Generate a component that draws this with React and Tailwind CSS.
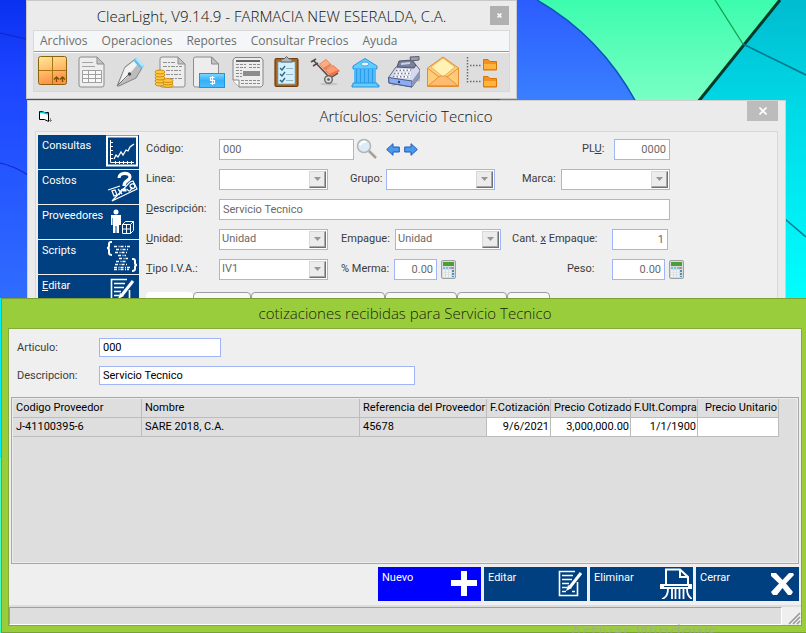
import React from "react";

const uiFont = "font-[Roboto,'Liberation_Sans',sans-serif]";
const titleFont = "font-['Open_Sans','Noto_Sans',sans-serif]";

function Wallpaper() {
  return (
    <svg className="absolute inset-0 h-full w-full" viewBox="0 0 806 633" preserveAspectRatio="xMinYMin slice" aria-hidden="true">
      <defs>
        <linearGradient id="wpBlue" x1="0" y1="0" x2="0" y2="1">
          <stop offset="0" stopColor="#0a30f0" />
          <stop offset="0.25" stopColor="#1c44ff" />
          <stop offset="1" stopColor="#2f6cff" />
        </linearGradient>
        <linearGradient id="wpBlue2" x1="0" y1="0" x2="0" y2="1">
          <stop offset="0" stopColor="#2c5cff" />
          <stop offset="1" stopColor="#3a80ff" />
        </linearGradient>
        <linearGradient id="wpMint" x1="0" y1="0" x2="0" y2="1">
          <stop offset="0" stopColor="#3cfcae" />
          <stop offset="1" stopColor="#7affc4" />
        </linearGradient>
        <linearGradient id="wpCyan" x1="0" y1="0" x2="0" y2="1">
          <stop offset="0" stopColor="#00bcd0" />
          <stop offset="0.35" stopColor="#00d8e6" />
          <stop offset="1" stopColor="#00ffff" />
        </linearGradient>
      </defs>
      <rect width="806" height="298" fill="url(#wpBlue)" />
      <path d="M0 33L26 39M0 163Q14 166 28 175" stroke="#1226c0" strokeWidth="1.2" fill="none" />
      <path d="M500 0H537Q600 36 636 102H500Z" fill="url(#wpBlue2)" />
      <path d="M537 0Q600 36 636 102H700L780 0Z" fill="url(#wpMint)" />
      <path d="M537 0Q600 36 636 102" stroke="#0a58b8" strokeWidth="1.5" fill="none" />
      <path d="M780 0L698 102V300H806V0Z" fill="url(#wpCyan)" />
      <path d="M780 0L698 102" stroke="#04382a" strokeWidth="3" />
      <path d="M715 0L743 44" stroke="#12a050" strokeWidth="1.3" />
      <path d="M743 44L806 75M785 219L806 237" stroke="#04788c" strokeWidth="1.6" />
      <rect y="298" width="806" height="160" fill="#00f0ff" />
      <rect y="458" width="806" height="175" fill="#48ffc4" />
    </svg>
  );
}

/* ---------- toolbar icons ---------- */

const Page = ({ x = 3, w = 25 }) => (
  <>
    <path d={`M${x + 2} 1H${x + w - 7}L${x + w} 8V29a2 2 0 0 1-2 2H${x + 2}a2 2 0 0 1-2-2V3a2 2 0 0 1 2-2Z`} fill="#ededed" stroke="#8c8c8c" />
    <path d={`M${x + w - 7} 1V8H${x + w}Z`} fill="#c4c4c4" stroke="#8c8c8c" />
  </>
);

const toolbar = [
  ["Almacén", (
    <>
      <defs>
        <linearGradient id="box" x1="0" y1="0" x2="0.3" y2="1">
          <stop offset="0" stopColor="#ffe898" /><stop offset="0.5" stopColor="#ffc070" /><stop offset="1" stopColor="#ff9048" />
        </linearGradient>
      </defs>
      <rect x="1.5" y="0.5" width="28" height="28" rx="2" fill="url(#box)" stroke="#8a6408" />
      <path d="M15.500 1V28M2 14.500H29" stroke="#a87410" />
      <path d="M19.500 26V21M25.500 26V21M17 23.500L19.500 21L22 23.500M23 23.500L25.500 21L28 23.500" stroke="#7a5200" fill="none" strokeWidth="1.300" />
    </>
  )],
  ["Hoja", (
    <>
      <Page />
      <path d="M6 6.500H17M6 10.500H19" stroke="#a4a4a4" />
      <path d="M6.500 14.500H25.500V26.500H6.500ZM6.500 18.500H25.500M6.500 22.500H25.500M12.500 14.500V26.500M19.500 14.500V26.500" stroke="#a0a0a0" fill="#f8f8f8" />
    </>
  )],
  ["Pluma", (
    <>
      <path d="M2 30L10 11L19 4L27 12L21 22L4 30Z" fill="#bcbcbc" stroke="#848484" />
      <path d="M10 12L19 5L22 9L11 22L4 28Z" fill="#f2f2f2" />
      <path d="M3 29L14 18" stroke="#707070" />
      <circle cx="14.500" cy="18" r="1.700" fill="#444" />
      <path d="M18 4L21 2L29 10L26 13Z" fill="#58c0f4" />
      <path d="M20 3L23 3L29 9L27 11Z" fill="#b0e4ff" />
    </>
  )],
  ["Pagos", (
    <>
      <Page x={6} w={25} />
      <path d="M9 6.500H22M9 10.500H28M12 14.500H28M12 18.500H28M16 22.500H28" stroke="#909090" strokeDasharray="4 1 2 1" />
      <g fill="#ffc848" stroke="#c88400" strokeWidth="0.900">
        <ellipse cx="6" cy="28" rx="5" ry="2" /><ellipse cx="6" cy="25" rx="5" ry="2" /><ellipse cx="6" cy="22" rx="5" ry="2" /><ellipse cx="6" cy="19" rx="5" ry="2" /><ellipse cx="6" cy="16" rx="5" ry="2" />
        <ellipse cx="14" cy="29.500" rx="5" ry="2" /><ellipse cx="14" cy="27" rx="5" ry="2" /><ellipse cx="14" cy="24.500" rx="5" ry="2" />
      </g>
    </>
  )],
  ["Facturas", (
    <>
      <Page x={0.5} w={25} />
      <defs>
        <linearGradient id="bill" x1="0" y1="0" x2="0" y2="1"><stop offset="0" stopColor="#7cd8ff" /><stop offset="0.5" stopColor="#38b0f8" /><stop offset="1" stopColor="#48bcff" /></linearGradient>
      </defs>
      <rect x="6.500" y="17.500" width="25" height="14" fill="url(#bill)" stroke="#1c94e0" />
      <path d="M21.500 21.500H17.500V24.500H21.500V27.500H17M19.500 20V29" stroke="#fff" fill="none" strokeWidth="1.200" />
    </>
  )],
  ["Prensa", (
    <>
      <path d="M3 1.500H29L31 4V29L29 31H7L1 24V4Z" fill="#ededed" stroke="#848484" />
      <path d="M1 24H7V31" fill="#fff" stroke="#848484" />
      <path d="M4 5H28" stroke="#666" strokeWidth="2" />
      <path d="M4 8.500H14M4 11.500H14M4 14.500H10M4 17.500H10M4 20.500H10M17 8.500H28M17 11.500H28M9 24.500H28M9 27.500H28" stroke="#8c8c8c" strokeDasharray="3 1" />
      <rect x="11" y="15" width="17" height="5" fill="#8c8c8c" />
    </>
  )],
  ["Pedidos", (
    <>
      <rect x="4" y="2.500" width="23" height="28" rx="1.500" fill="#a86420" stroke="#6e3c0c" strokeWidth="1.200" />
      <rect x="7" y="6" width="17" height="22" fill="#d4f0ff" stroke="#78b4d0" strokeWidth="0.800" />
      <path d="M10 6V3H13L15.500 0.500L18 3H21V6Z" fill="#b4b4b4" stroke="#666" />
      <path d="M9 12L11 14L14 10M9 18L11 20L14 16M9 24L11 26L14 22" stroke="#26667e" fill="none" strokeWidth="1.300" />
      <path d="M15 12.500H22M15 18.500H22M15 24.500H22" stroke="#98b4bc" />
    </>
  )],
  ["Despacho", (
    <>
      <ellipse cx="19" cy="28" rx="9" ry="1.500" fill="#c6c6c6" />
      <path d="M1 6L6 3M3 10L8 7M4 5L20 22L28 17" stroke="#5a4844" strokeWidth="1.500" fill="none" />
      <path d="M9 8L16 3L22 9L15 15Z" fill="#e8825c" />
      <path d="M15 15L23 9L30 15L21 21Z" fill="#e8744c" />
      <path d="M10 8L16 4L20 8L13 12Z" fill="#ffac7c" />
      <path d="M16 14L23 10L28 14L19 18Z" fill="#ff9c6c" />
      <circle cx="18.500" cy="23.500" r="3.800" fill="#dadada" stroke="#686868" strokeWidth="1.400" /><circle cx="18.500" cy="23.500" r="1.300" fill="#555" />
    </>
  )],
  ["Bancos", (
    <>
      <path d="M16 2.500L28 10V13H4V10Z" fill="#64ccff" stroke="#2496e0" />
      <ellipse cx="16" cy="8" rx="4" ry="2" fill="#e4f6ff" stroke="#2496e0" strokeWidth="0.800" />
      <rect x="5" y="13" width="22" height="14" fill="#54bcfa" />
      <path d="M7.500 13V27M11.500 13V27M15.500 13V27M19.500 13V27M23.500 13V27" stroke="#2c9ce8" strokeWidth="1.300" />
      <path d="M4 27H28V29H30V31H3V29H4Z" fill="#64ccff" stroke="#2496e0" />
    </>
  )],
  ["Caja", (
    <>
      <path d="M3 30L32 25V14L27 8" fill="#b4b4b4" />
      <path d="M0.500 21.500L8 11L28 9L32 14V20L24 31L1 27Z" fill="#d4d8f0" stroke="#646880" />
      <path d="M0.500 21.500L24 25V31L1 27Z" fill="#8cacf4" stroke="#4c5880" />
      <path d="M24 25L32 14V20L24 31Z" fill="#8c98b8" />
      <path d="M9 11L11 5L24 4L28 9L26 12Z" fill="#788098" stroke="#505464" />
      <path d="M13 8L22 7" stroke="#c0d4f8" strokeWidth="2" />
      <path d="M22 1L31 0.500V4L23 5Z" fill="#98a0ac" stroke="#5c5c70" />
      <path d="M8 14.500L24 14M6 17.500L24 17.500M5 20.500L22 21" stroke="#fff" strokeWidth="2" />
      <path d="M8 14.500L24 14M6 17.500L24 17.500M5 20.500L22 21" stroke="#7c7c88" strokeDasharray="1.500 2" strokeWidth="1.500" />
      <circle cx="11" cy="26" r="1.200" fill="#243c70" />
    </>
  )],
  ["Correo", (
    <>
      <path d="M0.500 12L16 1L31.500 12V30.500H0.500Z" fill="#ffcc78" stroke="#e48c30" />
      <path d="M16 2L28 11L16 21L4 11Z" fill="#fff2b4" stroke="#e8a850" strokeWidth="0.800" />
      <path d="M1 12.500L12 21L1 30M31 12.500L20 21L31 30M12 21H20" stroke="#e4903c" fill="none" />
      <path d="M1.500 29.500L13 20H19L30.500 29.500Z" fill="#ffbc70" stroke="#e4903c" strokeWidth="0.800" />
    </>
  )],
  ["Árbol", (
    <>
      <path d="M1.500 1V28M4 9.500H16M4 25.500H16" stroke="#686868" strokeWidth="1.500" strokeDasharray="1.500 1.500" fill="none" />
      <path d="M17.500 3.500H22L24 5.500H30.500V14H17.500Z" fill="#f4901c" stroke="#d87400" /><path d="M18 8H30V13H18Z" fill="#ffb440" />
      <path d="M17.500 20.500H22L24 22.500H30.500V31H17.500Z" fill="#f4901c" stroke="#d87400" /><path d="M18 25H30V30H18Z" fill="#ffb440" />
    </>
  )],
];

/* ---------- command button icons (white line art, 32px box) ---------- */

const glyphs = {
  chart: (
    <>
      <rect x="1" y="1.500" width="30" height="29" fill="none" stroke="#fff" strokeWidth="2" />
      <path d="M4.500 5V27.500H28M4 7.500H7M4 11.500H7M4 15.500H7M4 19.500H7M4 23.500H7M9.500 26V29M13.500 26V29M17.500 26V29M21.500 26V29M25.500 26V29" stroke="#fff" fill="none" />
      <path d="M8 24L10 20L12 22L15 17L17 20L20 15L22 16L24 12L28 9" stroke="#fff" fill="none" strokeWidth="1.300" />
    </>
  ),
  cost: (
    <>
      <path d="M2 20L14 16M24 12L27 11L31 19L6 31Z" stroke="#fff" fill="none" strokeWidth="1.200" />
      <path d="M6 21L8 26L11 25L9 20ZM12 19L16 24M16 19L13 25M21 19Q24 24 26 17M26 14C22 15 25 20 28 18C30 16 28 13 26 14" stroke="#fff" fill="none" strokeWidth="1.300" />
      <path d="M13 8C13 2 24 2 24 7C24 11 18 10 18 16M16.500 20H20.500" stroke="#fff" fill="none" strokeWidth="3.200" />
    </>
  ),
  provider: (
    <>
      <circle cx="10" cy="7" r="2.500" fill="#fff" />
      <path d="M5 10H15V20H13V28H10.500V21H9.500V28H7V13H6.500V20H5Z" fill="#fff" />
      <path d="M16.500 19.500H24.500V28.500H16.500ZM16.500 19.500L19.500 16.500H27.500V25.500L24.500 28.500M24.500 19.500L27.500 16.500M20.500 19.500V28.500M16.500 24H24.500" stroke="#fff" fill="none" />
    </>
  ),
  script: (
    <>
      <path d="M6 2H5Q3 2 3 4V6Q3 8 1 8Q3 8 3 10V13Q3 15 6 15M26 19H27Q29 19 29 21V23Q29 25 31 25Q29 25 29 27V29Q29 31 26 31" stroke="#fff" fill="none" strokeWidth="2" />
      <path d="M8 6.500H24M10 9.500H22M9 12.500H22M12 15.500H20M13 18.500H22M10 21.500H20M9 24.500H22M8 27.500H24M8 29.500H23" stroke="#fff" strokeDasharray="3 1.500 1 1" fill="none" strokeWidth="1.300" />
    </>
  ),
  edit: (
    <>
      <path d="M21 4.500H5.500V28.500H23.500V15" stroke="#fff" fill="none" strokeWidth="1.600" />
      <path d="M8 8.500H19M8 12.500H18M8 16.500H15M8 20.500H13M8 24.500H12M18 24.500H21" stroke="#fff" strokeWidth="1.500" />
      <path d="M27 6L16 20" stroke="#fff" strokeWidth="3" />
      <path d="M12 24L14 18L18 21Z" fill="#fff" />
    </>
  ),
  plus: <path d="M3 13H13V4H19V13H29V19H19V29H13V19H3Z" fill="#fff" />,
  shred: (
    <>
      <path d="M6 17V2.500H20L28 10V17M20 3V10H27" stroke="#fff" fill="none" strokeWidth="2" />
      <path d="M0 17H32V22H0Z" fill="#fff" /><path d="M4 19.500H28" stroke="#004080" />
      <path d="M8 22Q8 30 2 32M12 22V32M15.500 22V32M19.500 22V32M23.500 22V32M27 22Q27 29 32 32" stroke="#fff" fill="none" strokeWidth="1.800" />
    </>
  ),
  cross: <path d="M5 6H10L16.500 13L23 6H27L28 8L20 16.500L27 25L25 28H22L16.500 21L11 28H7L5 25L13 16.500L5 9Z" fill="#fff" />,
};

function CommandButton({ icon, children, className = "" }) {
  return (
    <button type="button" className={`flex h-[34px] items-start justify-between overflow-hidden pl-1 pr-px pt-1 text-left text-white ${className}`}>
      <span>{children}</span>
      <svg className="-mt-1 h-8 w-8 shrink-0" viewBox="0 0 32 32" aria-hidden="true">{glyphs[icon]}</svg>
    </button>
  );
}

/* ---------- form pieces ---------- */

function Field({ id, label, labelClass, inputClass, value }) {
  return (
    <>
      <label htmlFor={id} className={`shrink-0 text-[#3c3c3c] ${labelClass}`}>{label}</label>
      <input id={id} defaultValue={value} className={`h-[21px] shrink-0 border border-[#a0b4f8] bg-white px-[3px] text-[#6a6a6a] outline-none ${inputClass}`} />
    </>
  );
}

function Combo({ id, label, labelClass, boxClass, value = "" }) {
  return (
    <>
      <label htmlFor={id} className={`shrink-0 text-[#3c3c3c] ${labelClass}`}>{label}</label>
      <div className={`relative h-[21px] shrink-0 ${boxClass}`}>
        <select id={id} defaultValue={value} className="block h-full w-full appearance-none border border-[#a0b4f8] bg-white px-0.5 text-[#6a6a6a] outline-none">
          <option value={value}>{value}</option>
        </select>
        <span className="pointer-events-none absolute bottom-0.5 right-0.5 top-0.5 flex w-[17px] items-center justify-center border border-b-[#707070] border-l-[#d8d8d8] border-r-[#707070] border-t-[#d8d8d8] bg-[#ececec] shadow-[inset_-1px_-1px_0_#a8a8a8]">
          <svg className="h-1 w-[7px]" viewBox="0 0 7 4" aria-hidden="true"><path d="M0 0H7L3.500 4Z" fill="#969696" /></svg>
        </span>
      </div>
    </>
  );
}

function CalcButton() {
  return (
    <button type="button" aria-label="Calculadora" className="ml-1 shrink-0">
      <svg className="h-[19px] w-[15px]" viewBox="0 0 15 19" aria-hidden="true">
        <rect x="0.500" y="0.500" width="14" height="18" rx="1.500" fill="#d8dcdc" stroke="#9ca0a0" />
        <rect x="2" y="2" width="11" height="4" fill="#4c9c38" />
        <path d="M2 8H13" stroke="#60b0dc" strokeWidth="1.500" strokeDasharray="2 1" />
        <path d="M10 8H13" stroke="#e87048" strokeWidth="1.500" />
        <path d="M2 11H10M2 13.500H10M2 16H10" stroke="#f8f8f8" strokeWidth="1.500" strokeDasharray="2 1" />
        <path d="M12 10V17" stroke="#3c90cc" strokeWidth="2" strokeDasharray="2 1" />
      </svg>
    </button>
  );
}

function MainWindow() {
  return (
    <section className="absolute left-[26px] top-0 w-[491px] border border-[#c8c8c8] bg-[#ebebeb] px-1.5 pb-1.5">
      <header className="flex h-[29px] items-center">
        <h1 className={`flex-1 pl-5 text-center text-[15px] font-light leading-5 text-[#101010] ${titleFont}`}>ClearLight, V9.14.9 - FARMACIA NEW ESERALDA, C.A.</h1>
        <button type="button" aria-label="Cerrar ventana" className="mr-px flex h-[19px] w-[19px] items-center justify-center bg-[#b0b0b0]">
          <svg className="h-[5px] w-[5px]" viewBox="0 0 5 5" aria-hidden="true"><path d="M0.500 0.500L4.500 4.500M4.500 0.500L0.500 4.500" stroke="#fff" strokeWidth="1.500" /></svg>
        </button>
      </header>
      <div className="border border-[#d8d8d8] bg-[#dedede]">
        <nav className={`flex h-5 items-center gap-[14px] bg-[#f4f6f8] px-1.5 text-[12px] leading-4 text-[#6e6e6e] ${titleFont}`}>
          {["Archivos", "Operaciones", "Reportes", "Consultar Precios", "Ayuda"].map((item) => (
            <button type="button" key={item}>{item}</button>
          ))}
        </nav>
        <div className="border-t border-[#989898]">
          <div className="flex h-[39px] items-center gap-[7px] border-t border-white pl-[3px]">
            {toolbar.map(([name, drawing]) => (
              <button type="button" key={name} aria-label={name}>
                <svg className="h-8 w-8" viewBox="0 0 32 32" aria-hidden="true">{drawing}</svg>
              </button>
            ))}
          </div>
        </div>
      </div>
    </section>
  );
}

function ArticlesWindow() {
  return (
    <section className="absolute bottom-0 left-[27px] top-[100px] flex w-[759px] flex-col border border-[#d0d0d0] bg-[#ebebeb] px-[7px]">
      <header className="flex h-[30px] shrink-0 items-start">
        <svg className="ml-1 mt-[9px] h-[14px] w-[14px]" viewBox="0 0 14 14" aria-hidden="true">
          <path d="M0.500 1.500H3.500L5.500 2.500H9.500V11.500L5.500 9.500H0.500Z" fill="#fff" stroke="#000" />
          <path d="M1 2.500H4L9 4" stroke="#00c8d0" strokeWidth="1.500" fill="none" />
          <path d="M11.500 8V12M10 10.500H13" stroke="#888" />
        </svg>
        <h2 className={`mt-[5px] flex-1 pl-3 text-center text-[15px] font-light leading-5 text-[#101010] ${titleFont}`}>Artículos: Servicio Tecnico</h2>
        <button type="button" aria-label="Cerrar ventana" className="flex h-5 w-[31px] items-center justify-center bg-[#bcbcbc]">
          <svg className="h-2 w-2" viewBox="0 0 8 8" aria-hidden="true"><path d="M0.500 0.500L7.500 7.500M7.500 0.500L0.500 7.500" stroke="#fff" strokeWidth="1.600" /></svg>
        </button>
      </header>
      <div className="flex flex-1 border border-[#d8d8d8] bg-[#efefef] pl-0.5 pt-[3px]">
        <nav className="flex w-[101px] shrink-0 flex-col gap-px">
          <CommandButton icon="chart" className="bg-[#004080]">Consultas</CommandButton>
          <CommandButton icon="cost" className="bg-[#004080]">Costos</CommandButton>
          <CommandButton icon="provider" className="bg-[#004080]">Proveedores</CommandButton>
          <CommandButton icon="script" className="bg-[#004080]">Scripts</CommandButton>
          <CommandButton icon="edit" className="bg-[#004080]"><u>E</u>ditar</CommandButton>
        </nav>
        <div className="ml-[7px]">
          <form className="flex flex-col gap-2 pt-[3px]">
            <div className="flex h-[22px] w-[524px] items-center">
              <Field id="codigo" label="Código:" labelClass="w-[73px]" inputClass="w-[135px]" value="000" />
              <button type="button" aria-label="Buscar" className="ml-0.5">
                <svg className="h-[22px] w-[22px]" viewBox="0 0 22 22" aria-hidden="true">
                  <circle cx="8" cy="8" r="6.500" fill="#dcecf6" stroke="#b4b4b4" strokeWidth="1.500" />
                  <path d="M4 7Q6 3 10 4" stroke="#fff" fill="none" strokeWidth="2" />
                  <path d="M13 13L20 20" stroke="#a8a09c" strokeWidth="2.500" />
                </svg>
              </button>
              <button type="button" aria-label="Anterior" className="ml-2">
                <svg className="h-[13px] w-[14px]" viewBox="0 0 14 13" aria-hidden="true"><path d="M0.700 6.500L7 0.700V4H13.300V9H7V12.300Z" fill="#4c98ec" stroke="#1c5cb4" /></svg>
              </button>
              <button type="button" aria-label="Siguiente" className="ml-1">
                <svg className="h-[13px] w-[14px]" viewBox="0 0 14 13" aria-hidden="true"><path d="M13.300 6.500L7 0.700V4H0.700V9H7V12.300Z" fill="#4c98ec" stroke="#1c5cb4" /></svg>
              </button>
              <div className="ml-auto flex items-center">
                <Field id="plu" label={<>PL<u>U</u>:</>} labelClass="w-8" inputClass="w-14 text-right" value="0000" />
              </div>
            </div>
            <div className="flex h-[22px] items-center">
              <Combo id="linea" label="Linea:" labelClass="w-[73px]" boxClass="w-[109px]" />
              <Combo id="grupo" label="Grupo:" labelClass="ml-[22px] w-9" boxClass="w-[109px]" />
              <Combo id="marca" label="Marca:" labelClass="ml-[27px] w-[39px]" boxClass="w-[109px]" />
            </div>
            <div className="flex h-[22px] items-center">
              <Field id="descripcion" label={<><u>D</u>escripción:</>} labelClass="w-[73px]" inputClass="w-[451px]" value="Servicio Tecnico" />
            </div>
            <div className="flex h-[22px] items-center">
              <Combo id="unidad" label={<><u>U</u>nidad:</>} labelClass="w-[73px]" boxClass="w-[109px]" value="Unidad" />
              <Combo id="empaque" label="Empague:" labelClass="ml-[13px] w-[54px]" boxClass="w-[106px]" value="Unidad" />
              <Field id="cantidad" label={<>Cant. <u>x</u> Empaque:</>} labelClass="ml-[11px] w-[100px]" inputClass="w-14 text-right" value="1" />
            </div>
            <div className="flex h-[22px] items-center">
              <Combo id="iva" label={<><u>T</u>ipo I.V.A.:</>} labelClass="w-[73px]" boxClass="w-[109px]" value="IV1" />
              <Field id="merma" label="% Merma:" labelClass="ml-[13px] w-[53px]" inputClass="w-[43px] text-right" value="0.00" />
              <CalcButton />
              <Field id="peso" label="Peso:" labelClass="ml-[111px] w-[45px]" inputClass="w-[53px] text-right" value="0.00" />
              <CalcButton />
            </div>
          </form>
          <div className="mt-3 flex h-10 items-stretch" role="tablist">
            <button type="button" role="tab" aria-label="General" className="w-[47px] rounded-t-sm bg-white" />
            <button type="button" role="tab" aria-label="Precios" className="w-[58px] rounded-t border border-[#9c9c9c] bg-[#f8f8f8]" />
            <button type="button" role="tab" aria-label="Existencias" className="w-[134px] rounded-t border border-[#9c9c9c] bg-[#f8f8f8]" />
            <button type="button" role="tab" aria-label="Costos" className="w-[72px] rounded-t border border-[#9c9c9c] bg-[#f8f8f8]" />
            <button type="button" role="tab" aria-label="Notas" className="w-[50px] rounded-t border border-[#9c9c9c] bg-[#f8f8f8]" />
            <button type="button" role="tab" aria-label="Otros" className="w-[43px] rounded-t border border-[#9c9c9c] bg-[#f8f8f8]" />
          </div>
        </div>
      </div>
    </section>
  );
}

function QuotesTable() {
  const head = "border-b border-r border-[#bcbcbc] pl-[3px] pr-px font-normal whitespace-nowrap";
  const cell = "border-b border-r border-[#bcbcbc] pl-[3px] pr-px whitespace-nowrap";
  return (
    <div className="mx-0.5 flex-1 border border-[#a8a8a8] bg-[#dedede]">
      <div className="h-full border border-[#ececec]">
        <table className="w-full table-fixed border-separate border-spacing-0 text-black">
          <colgroup>
            <col className="w-[129px]" /><col /><col className="w-[127px]" /><col className="w-16" /><col className="w-20" /><col className="w-[67px]" /><col className="w-[81px]" /><col className="w-[18px]" />
          </colgroup>
          <thead>
            <tr className="h-[19px] text-left">
              <th className={head}>Codigo Proveedor</th>
              <th className={head}>Nombre</th>
              <th className={head}>Referencia del Proveedor</th>
              <th className={head}>F.Cotización</th>
              <th className={head}>Precio Cotizado</th>
              <th className={head}>F.Ult.Compra</th>
              <th className={`${head} text-right`}>Precio Unitario</th>
              <td />
            </tr>
          </thead>
          <tbody>
            <tr className="h-[19px]">
              <td className={cell}>J-41100395-6</td>
              <td className={cell}>SARE 2018, C.A.</td>
              <td className={cell}>45678</td>
              <td className={`${cell} bg-white text-right`}>9/6/2021</td>
              <td className={`${cell} bg-white text-right`}>3,000,000.00</td>
              <td className={`${cell} bg-white text-right`}>1/1/1900</td>
              <td className={`${cell} bg-white`} />
              <td />
            </tr>
          </tbody>
        </table>
      </div>
    </div>
  );
}

function QuotesDialog() {
  const input = "h-[19px] border border-[#a0b4f8] bg-white px-[3px] text-black outline-none";
  return (
    <section role="dialog" aria-labelledby="quotes-title" className="absolute bottom-0 left-px right-0 top-[298px] flex flex-col border-y border-l border-[#7ca030] bg-[#9acd3c] pb-1.5 pl-1.5 pr-1">
      <h2 id="quotes-title" className={`h-[29px] shrink-0 pt-1 text-center text-[15px] font-light leading-5 text-[#18240a] ${titleFont}`}>cotizaciones recibidas para Servicio Tecnico</h2>
      <div className="flex flex-1 flex-col border border-[#84aa3c] bg-[#efefef]">
        <form className="flex flex-col gap-[9px] px-2 pb-3 pt-[9px] text-[#3c3c3c]">
          <div className="flex items-center">
            <label htmlFor="q-articulo" className="w-[82px]">Articulo:</label>
            <input id="q-articulo" defaultValue="000" className={`${input} w-[122px]`} />
          </div>
          <div className="flex items-center">
            <label htmlFor="q-descripcion" className="w-[82px]">Descripcion:</label>
            <input id="q-descripcion" defaultValue="Servicio Tecnico" className={`${input} w-[316px]`} />
          </div>
        </form>
        <QuotesTable />
        <div className="flex justify-end gap-[3px] px-0.5 pb-1 pt-[3px]">
          <CommandButton icon="plus" className="w-[103px] bg-[#0000ff]">Nuevo</CommandButton>
          <CommandButton icon="edit" className="w-[103px] bg-[#004080]">Editar</CommandButton>
          <CommandButton icon="shred" className="w-[103px] bg-[#004080]">Eliminar</CommandButton>
          <CommandButton icon="cross" className="w-[103px] bg-[#004080]">Cerrar</CommandButton>
        </div>
        <footer className="flex h-5 border-t-2 border-[#dedede]">
          <div className="flex-1 border border-b-white border-l-[#a0a0a0] border-r-white border-t-[#a0a0a0] bg-[#dedede]" />
          <svg className="ml-[3px] h-[18px] w-4" viewBox="0 0 16 18" aria-hidden="true">
            <path d="M4 17L15 6M8 17L15 10M12 17L15 14" stroke="#989898" strokeWidth="1.600" />
          </svg>
        </footer>
      </div>
    </section>
  );
}

export default function App() {
  return (
    <main className={`relative h-screen overflow-hidden text-[11px] leading-[14px] ${uiFont}`}>
      <Wallpaper />
      <MainWindow />
      <ArticlesWindow />
      <QuotesDialog />
      <p className={`pointer-events-none absolute left-[570px] top-[617px] whitespace-nowrap text-[19px] leading-7 text-[#a4a4a4]/60 ${titleFont}`}>Activar Windows</p>
    </main>
  );
}
